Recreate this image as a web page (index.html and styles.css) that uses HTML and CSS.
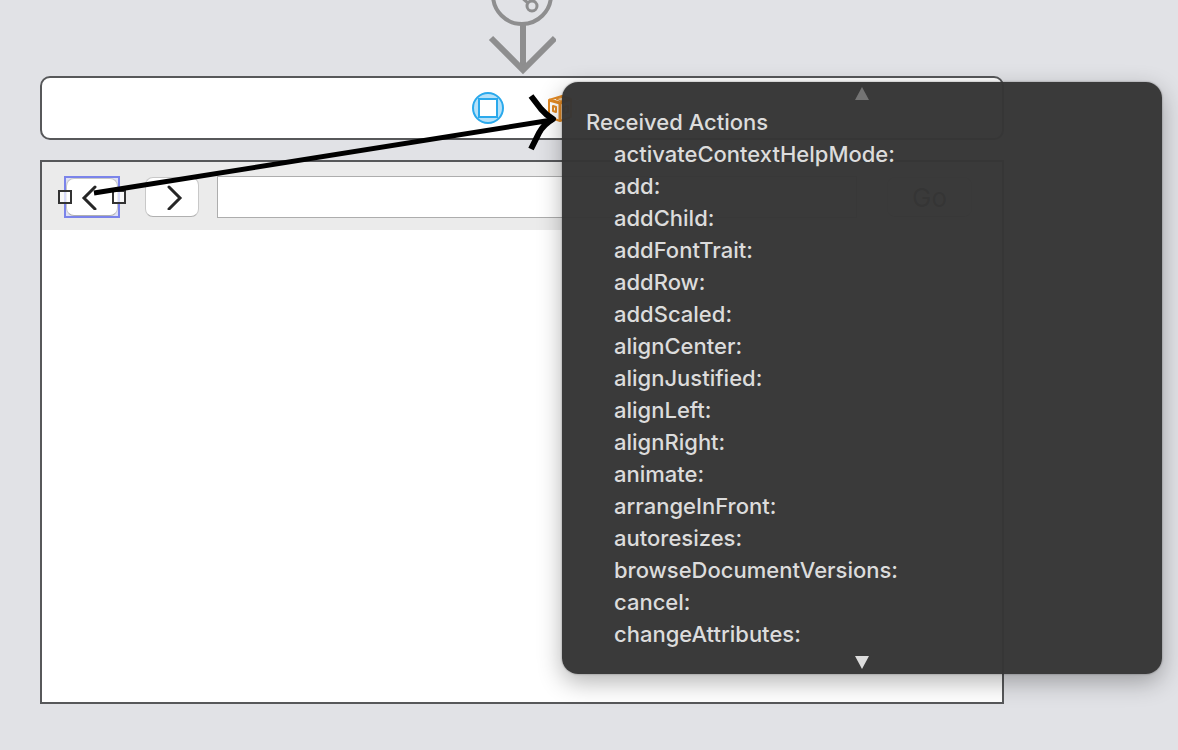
FILE: index.html
```html
<!DOCTYPE html>
<html lang="en">
<head>
    <meta charset="UTF-8">
    <meta name="viewport" content="width=device-width, initial-scale=1.0">
    <title>Storyboard</title>
    <link rel="stylesheet" href="styles.css">
</head>
<body>

    <div class="canvas">

        <!-- Scene entry point -->
        <div class="entry-point">
            <svg width="68" height="76" viewBox="0 0 68 76" fill="none" stroke="#8e8e8f">
                <circle cx="34" cy="-5" r="29" stroke-width="4"/>
                <path d="M33 -3L40 3" stroke-width="3"/>
                <circle cx="44" cy="6" r="5" stroke-width="3"/>
                <path d="M35 24V68" stroke-width="6"/>
                <path d="M3 38L35 70L67 38" stroke-width="6"/>
            </svg>
        </div>

        <!-- Scene dock -->
        <div class="scene-dock">
            <svg width="32" height="32" viewBox="0 0 32 32" stroke="#2aa9ec" stroke-width="2">
                <circle cx="16" cy="16" r="15" fill="#b5e1f9"/>
                <rect x="7" y="7" width="18" height="18" fill="#fff"/>
            </svg>
            <svg width="26" height="32" viewBox="0 0 26 32" fill="#fff" stroke="#e38a24" stroke-width="2" stroke-linejoin="round">
                <path d="M3 8L16 4L25 7V25L14 29L3 25Z"/>
                <path d="M3 8L14 11L25 7" stroke-width="3"/>
                <path d="M14 11V28" stroke-width="3"/>
                <path d="M10 7L17 5L21 7L15 9Z" fill="#f6d3a7" stroke-width="1"/>
                <path d="M7 14L10 15V20L7 19Z"/>
                <path d="M18 15L22 14V20L18 21Z"/>
            </svg>
        </div>

        <!-- Browser window -->
        <div class="scene-window">
            <div class="toolbar">
                <div class="selection">
                    <button class="nav-button" aria-label="Back">
                        <svg width="24" height="26" viewBox="0 0 24 26"><path d="M15 3L4 14L15 25"/></svg>
                    </button>
                    <span class="handle handle-left"></span>
                    <span class="handle handle-right"></span>
                </div>
                <button class="nav-button nav-forward" aria-label="Forward">
                    <svg width="24" height="26" viewBox="0 0 24 26"><path d="M9 3L20 14L9 25"/></svg>
                </button>
                <input type="text" class="address" aria-label="Address">
                <button class="nav-button go-button">Go</button>
            </div>
        </div>

        <!-- Popup with the actions of the first responder -->
        <div class="popup">
            <button class="scroll-button scroll-up" aria-label="Scroll up">
                <svg width="14" height="16" viewBox="0 0 14 16"><path d="M7 1L14 14H0Z"/></svg>
            </button>
            <h2>Received Actions</h2>
            <ul>
                <li>activateContextHelpMode:</li>
                <li>add:</li>
                <li>addChild:</li>
                <li>addFontTrait:</li>
                <li>addRow:</li>
                <li>addScaled:</li>
                <li>alignCenter:</li>
                <li>alignJustified:</li>
                <li>alignLeft:</li>
                <li>alignRight:</li>
                <li>animate:</li>
                <li>arrangeInFront:</li>
                <li>autoresizes:</li>
                <li>browseDocumentVersions:</li>
                <li>cancel:</li>
                <li>changeAttributes:</li>
            </ul>
            <button class="scroll-button" aria-label="Scroll down">
                <svg width="14" height="16" viewBox="0 0 14 16"><path d="M0 2H14L7 15Z"/></svg>
            </button>
        </div>

        <!-- Connection from the back button to the first responder -->
        <svg class="connection" width="480" height="120" viewBox="90 90 480 120" fill="none" stroke="#000" stroke-width="5">
            <path d="M94 193L552 120"/>
            <path d="M531 96L541 109Q546 115 553 119Q543 125 539 133L531 149" stroke-width="6" stroke-linejoin="round"/>
        </svg>

    </div>

</body>
</html>
```

FILE: styles.css
```css
* {
    margin: 0;
    padding: 0;
    box-sizing: border-box;
}

body {
    background-color: #e1e2e6;
    font-family: Inter, "Liberation Sans", sans-serif;
    font-size: 22px;
    color: #262626;
}

svg {
    display: block;
}

.canvas {
    position: relative;
    min-height: 100vh;
    padding: 0 174px 46px 40px;
    display: flex;
    flex-direction: column;
}

.entry-point {
    display: flex;
    justify-content: center;
}

.scene-dock {
    display: flex;
    align-items: center;
    justify-content: center;
    gap: 42px;
    height: 64px;
    margin-bottom: 20px;
    background-color: #fff;
    border: 2px solid #57585a;
    border-radius: 10px;
}

.scene-window {
    flex: 1;
    background-color: #fff;
    border: 2px solid #57585a;
}

/* Toolbar */
.toolbar {
    display: flex;
    align-items: center;
    gap: 18px;
    height: 68px;
    padding: 2px 30px 0 22px;
    background-color: #ebebeb;
}

.nav-button {
    display: flex;
    align-items: center;
    justify-content: center;
    width: 54px;
    height: 40px;
    background-color: #fff;
    border: 1px solid #c8c8c8;
    border-bottom-color: #b0b0b0;
    border-radius: 8px;
    font: inherit;
    color: inherit;
}

.nav-button path {
    fill: none;
    stroke: #262626;
    stroke-width: 3;
    stroke-linecap: round;
}

.selection {
    position: relative;
    width: 56px;
    height: 42px;
    margin-right: 7px;
    border: 2px solid #7b84ea;
    background-color: #dfe1f5;
}

.selection .nav-button {
    width: 52px;
    height: 38px;
}

.handle {
    position: absolute;
    top: 12px;
    width: 14px;
    height: 14px;
    border: 2px solid #333;
    background-color: rgba(255, 255, 255, 0.7);
}

.handle-left {
    left: -8px;
}

.handle-right {
    right: -8px;
}

.address {
    flex: 1;
    min-width: 0;
    height: 42px;
    padding: 0 8px;
    border: 1px solid #adadad;
    background-color: #fff;
    font: inherit;
}

.go-button {
    width: 85px;
    margin-left: 12px;
    font-size: 26px;
}

/* Popup */
.popup {
    position: absolute;
    top: 82px;
    left: 562px;
    right: 16px;
    background-color: rgba(53, 53, 53, 0.975);
    border-radius: 16px;
    box-shadow: 0 0 2px rgba(0, 0, 0, 0.4), 0 8px 24px rgba(0, 0, 0, 0.3);
    color: #dcdcdc;
    line-height: 32px;
}

.popup h2 {
    padding-left: 24px;
    font-size: 22px;
    font-weight: 450;
}

.popup ul {
    padding-left: 52px;
    list-style: none;
    font-weight: 450;
}

.scroll-button {
    display: flex;
    align-items: center;
    justify-content: center;
    width: 100%;
    height: 24px;
    border: none;
    background: none;
}

.scroll-button path {
    fill: #dcdcdc;
}

.scroll-up path {
    fill: #747474;
}

/* Connection line */
.connection {
    position: absolute;
    top: 90px;
    left: 90px;
    pointer-events: none;
}
```
